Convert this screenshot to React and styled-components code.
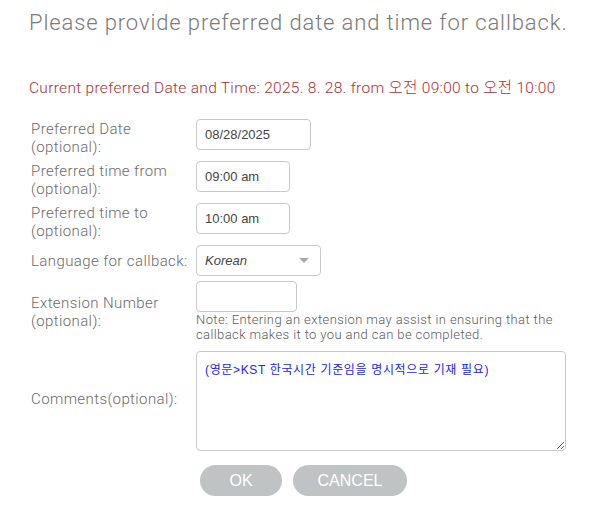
import styled, { createGlobalStyle } from 'styled-components';

const GlobalStyle = createGlobalStyle`
  body {
    margin: 0;
    background: #ffffff;
    font-family: Roboto, "Noto Sans", sans-serif;
  }
`;

const Page = styled.div`
  width: 600px;
  height: 506px;
  padding: 0 0 0 29px;
  box-sizing: border-box;
  overflow: hidden;
`;

const Title = styled.h1`
  margin: 0;
  padding-top: 9px;
  font-family: Roboto, sans-serif;
  font-weight: 300;
  font-size: 22px;
  letter-spacing: 0.88px;
  line-height: 28px;
  color: #7a7a7a;
  white-space: nowrap;
`;

const Current = styled.p`
  margin: 41px 0 0 0;
  font-family: Roboto, "Noto Sans CJK KR", sans-serif;
  font-weight: 300;
  font-size: 15.5px;
  letter-spacing: 0.3px;
  line-height: 20px;
  color: #a93036;
  white-space: nowrap;
`;

const Form = styled.div`
  margin-top: 21px;
  display: grid;
  grid-template-columns: 167px 1fr;
  row-gap: 5px;
  align-items: center;
`;

const Label = styled.div`
  padding-left: 2px;
  font-family: Roboto, sans-serif;
  font-weight: 300;
  font-size: 15px;
  letter-spacing: 0.4px;
  line-height: 18px;
  color: #6a6a6a;
  white-space: ${(props) => (props.inline ? 'nowrap' : 'normal')};
`;

const Field = styled.div`
  display: flex;
  flex-direction: column;
  align-items: flex-start;
  padding-bottom: ${(props) => props.pb || '0'};
  padding-top: ${(props) => props.pt || '0'};
`;

const TextBox = styled.input`
  box-sizing: border-box;
  width: ${(props) => props.width};
  height: 31px;
  margin: 0;
  padding: 0 8px;
  border: 1px solid #c9c9c9;
  border-radius: 4px;
  background: #fff;
  font-family: "Liberation Sans", Arial, sans-serif;
  font-size: 13px;
  color: #444444;
  outline: none;
`;

const SelectBox = styled.div`
  box-sizing: border-box;
  width: 125px;
  height: 31px;
  padding: 0 8px;
  border: 1px solid #c9c9c9;
  border-radius: 4px;
  display: flex;
  align-items: center;
  justify-content: space-between;
  font-family: "Liberation Sans", Arial, sans-serif;
  font-style: italic;
  font-size: 13px;
  color: #444444;
`;

const Caret = styled.span`
  width: 0;
  height: 0;
  margin-right: 3px;
  border-left: 5px solid transparent;
  border-right: 5px solid transparent;
  border-top: 5px solid #a8a8a8;
`;

const Note = styled.div`
  font-family: Roboto, sans-serif;
  font-weight: 300;
  font-size: 13px;
  letter-spacing: 0.4px;
  line-height: 15px;
  color: #5a5a5a;
  width: 370px;
`;

const Comments = styled.textarea`
  box-sizing: border-box;
  width: 370px;
  height: 100px;
  margin: 0;
  padding: 10px 8px;
  border: 1px solid #c9c9c9;
  border-radius: 4px;
  font-family: "Liberation Sans", "Noto Sans CJK KR", sans-serif;
  font-size: 12px;
  letter-spacing: 0.65px;
  line-height: 16px;
  color: #2323f5;
  outline: none;
  resize: both;
`;

const Buttons = styled.div`
  margin: 14px 0 0 171px;
  display: flex;
  gap: 11px;
`;

const Button = styled.button`
  width: ${(props) => props.width};
  height: 31px;
  border: none;
  border-radius: 16px;
  background: #bfc3c3;
  color: #ffffff;
  font-family: "Liberation Sans", Arial, sans-serif;
  font-size: 16px;
  padding: 0;
  cursor: pointer;
`;

export default function App() {
  return (
    <Page>
      <GlobalStyle />
      <Title>Please provide preferred date and time for callback.</Title>
      <Current>Current preferred Date and Time: 2025. 8. 28. from 오전 09:00 to 오전 10:00</Current>
      <Form>
        <Label>Preferred Date<br />(optional):</Label>
        <Field pb="6px">
          <TextBox width="115px" defaultValue="08/28/2025" />
        </Field>

        <Label>Preferred time from<br />(optional):</Label>
        <Field pb="6px">
          <TextBox width="94px" defaultValue="09:00 am" />
        </Field>

        <Label>Preferred time to<br />(optional):</Label>
        <Field pb="6px">
          <TextBox width="94px" defaultValue="10:00 am" />
        </Field>

        <Label inline>Language for callback:</Label>
        <Field>
          <SelectBox>
            Korean
            <Caret />
          </SelectBox>
        </Field>

        <Label>Extension Number<br />(optional):</Label>
        <Field>
          <TextBox width="101px" defaultValue="" />
          <Note>Note: Entering an extension may assist in ensuring that the callback makes it to you and can be completed.</Note>
        </Field>

        <Label>Comments(optional):</Label>
        <Field pt="4px">
          <Comments defaultValue="(영문>KST 한국시간 기준임을 명시적으로 기재 필요)" />
        </Field>
      </Form>
      <Buttons>
        <Button width="82px">OK</Button>
        <Button width="114px">CANCEL</Button>
      </Buttons>
    </Page>
  );
}
